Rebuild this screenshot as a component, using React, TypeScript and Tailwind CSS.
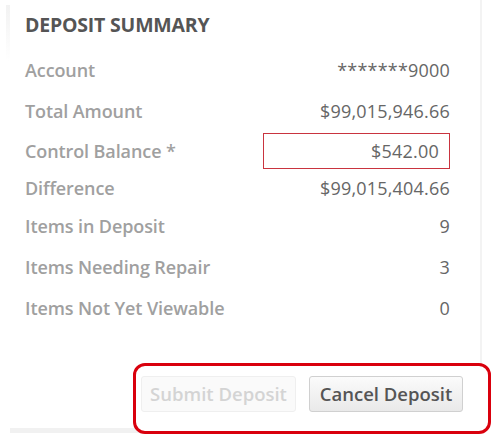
const rows: { label: string; value: string; h: string }[] = [
  { label: "Account", value: "*******9000", h: "h-[41px]" },
  { label: "Total Amount", value: "$99,015,946.66", h: "h-[41px]" },
];

const counts: { label: string; value: string }[] = [
  { label: "Items in Deposit", value: "9" },
  { label: "Items Needing Repair", value: "3" },
  { label: "Items Not Yet Viewable", value: "0" },
];

const Row = ({ label, value, h }: { label: string; value: string; h: string }) => (
  <div className={`flex items-center justify-between ${h}`}>
    <span className="text-[18px] font-semibold text-[#a0a0a0] tracking-[-0.1px]">{label}</span>
    <span className="text-[18px] text-[#666] tracking-[0.2px]">{value}</span>
  </div>
);

export default function App() {
  return (
    <div className="w-[500px] h-[446px] bg-white overflow-hidden font-['Open_Sans',sans-serif]">
      <div className="flex">
        <div className="w-[4px] ml-[6px] mt-[5px] h-[56px] bg-gradient-to-b from-[#f2f2f2] to-white" />
        <div className="w-[472px] h-[433px] border-r-2 border-b-[5px] border-r-[#f3f3f3] border-b-[#f1f1f1]">
          <div className="pl-[15px] pr-[30px]">
            <div className="h-[50px] flex items-center">
              <h2 className="text-[19.5px] font-bold text-[#555] tracking-[-0.2px]">DEPOSIT SUMMARY</h2>
            </div>
            {rows.map((r) => (
              <Row key={r.label} {...r} />
            ))}
            <div className="flex items-center justify-between h-[38px]">
              <span className="text-[18px] font-semibold text-[#a0a0a0] tracking-[-0.1px]">Control Balance *</span>
              <div className="w-[187px] h-[36px] border-[1.5px] border-[#c9343f] flex items-center justify-end pr-[10px] text-[18px] text-[#666] tracking-[0.2px]">
                $542.00
              </div>
            </div>
            <Row label="Difference" value="$99,015,404.66" h="h-[36px]" />
            {counts.map((c) => (
              <Row key={c.label} label={c.label} value={c.value} h="h-[41px]" />
            ))}
          </div>
          <div className="mt-[34px] ml-[123px] w-[358px] h-[71px] relative bg-white border-[3px] border-[#d9000d] rounded-[12px] flex items-start pt-[10px] gap-[13px] pl-[5px]">
            <button className="h-[36px] w-[155px] rounded-[3px] border border-[#efefef] bg-[#fafafa] text-[18.5px] font-semibold text-[#d4d4d4]">
              Submit Deposit
            </button>
            <button className="h-[36px] w-[154px] rounded-[3px] border border-[#d0d0d0] bg-gradient-to-b from-[#fbfbfb] to-[#e9e9e9] text-[18.5px] font-semibold text-[#555]">
              Cancel Deposit
            </button>
          </div>
        </div>
      </div>
    </div>
  );
}
